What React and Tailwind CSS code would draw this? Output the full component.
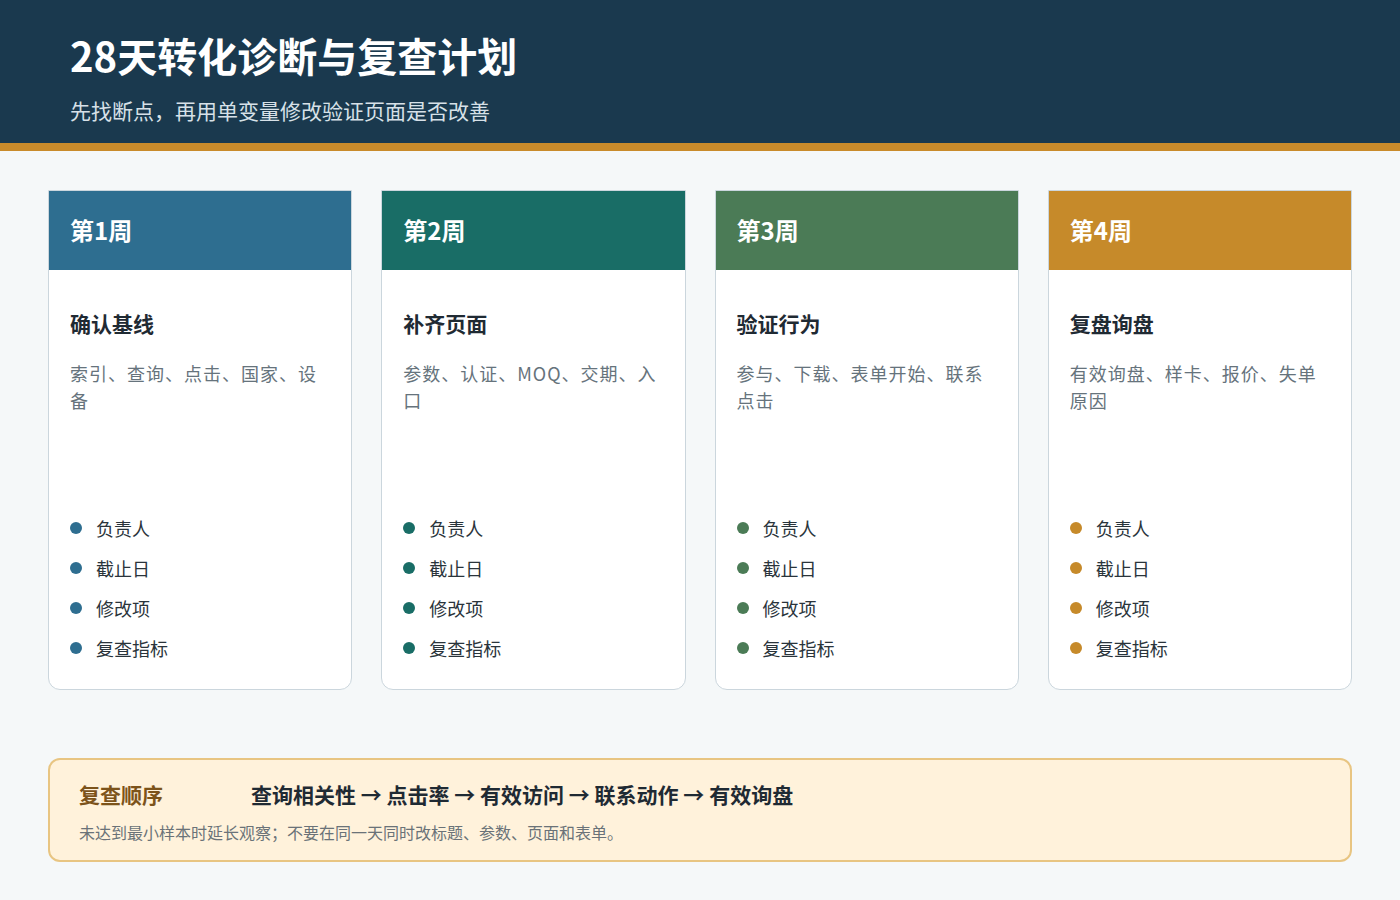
const weeks = [
  { w: "第1周", color: "bg-[#2e6e90]", dot: "bg-[#2e6e90]", t: "确认基线", d: "索引、查询、点击、国家、设备" },
  { w: "第2周", color: "bg-[#196d66]", dot: "bg-[#196d66]", t: "补齐页面", d: "参数、认证、MOQ、交期、入口" },
  { w: "第3周", color: "bg-[#4b7b56]", dot: "bg-[#4b7b56]", t: "验证行为", d: "参与、下载、表单开始、联系点击" },
  { w: "第4周", color: "bg-[#c68a2a]", dot: "bg-[#c68a2a]", t: "复盘询盘", d: "有效询盘、样卡、报价、失单原因" },
];
const items = ["负责人", "截止日", "修改项", "复查指标"];
export default function App() {
  return (
    <div className="w-[1400px] h-[900px] bg-[#f5f8f9] flex flex-col" style={{ fontFamily: '"Noto Sans CJK SC", "Noto Sans", sans-serif' }}>
      <div className="h-[143px] bg-[#1a394e] px-[70px] pt-[28px] flex flex-col">
        <h1 className="text-[40px] leading-[54px] font-bold text-white">28天转化诊断与复查计划</h1>
        <p className="mt-[14px] text-[21px] leading-[28px] text-[#d7e1e8]">先找断点，再用单变量修改验证页面是否改善</p>
      </div>
      <div className="h-[8px] bg-[#c98b2b]" />
      <div className="px-[48px] pt-[39px] flex gap-[29px]">
        {weeks.map((c) => (
          <div key={c.w} className="w-[308px] h-[500px] bg-white border border-[#cbd6dd] rounded-b-[12px] flex flex-col overflow-hidden">
            <div className={`${c.color} h-[80px] -mx-px -mt-px px-[22px] flex items-center text-white text-[24px] font-bold`}>{c.w}</div>
            <div className="px-[21px] pt-[38px] flex flex-col flex-1">
              <div className="text-[21px] leading-[30px] font-bold text-[#1f2a33]">{c.t}</div>
              <div className="mt-[22px] w-[262px] text-[18px] tracking-[1px] leading-[27px] text-[#66737c] h-[155px]">{c.d}</div>
              <div className="flex flex-col gap-[14px]">
                {items.map((i) => (
                  <div key={i} className="flex items-center gap-[14px] h-[26px] text-[18px] text-[#2a343b]">
                    <span className={`${c.dot} w-[12px] h-[12px] rounded-full`} />{i}
                  </div>
                ))}
              </div>
            </div>
          </div>
        ))}
      </div>
      <div className="mx-[48px] mt-[68px] h-[104px] bg-[#fff2db] border-2 border-[#e8c582] rounded-[12px] px-[29px] pt-[18px]">
        <div className="flex items-center text-[21px] leading-[32px] font-bold">
          <span className="text-[#7c531a] w-[172px]">复查顺序</span>
          <span className="text-[#1f2a33]">查询相关性 → 点击率 → 有效访问 → 联系动作 → 有效询盘</span>
        </div>
        <div className="mt-[10px] text-[16px] text-[#6a7278]">未达到最小样本时延长观察；不要在同一天同时改标题、参数、页面和表单。</div>
      </div>
    </div>
  );
}
